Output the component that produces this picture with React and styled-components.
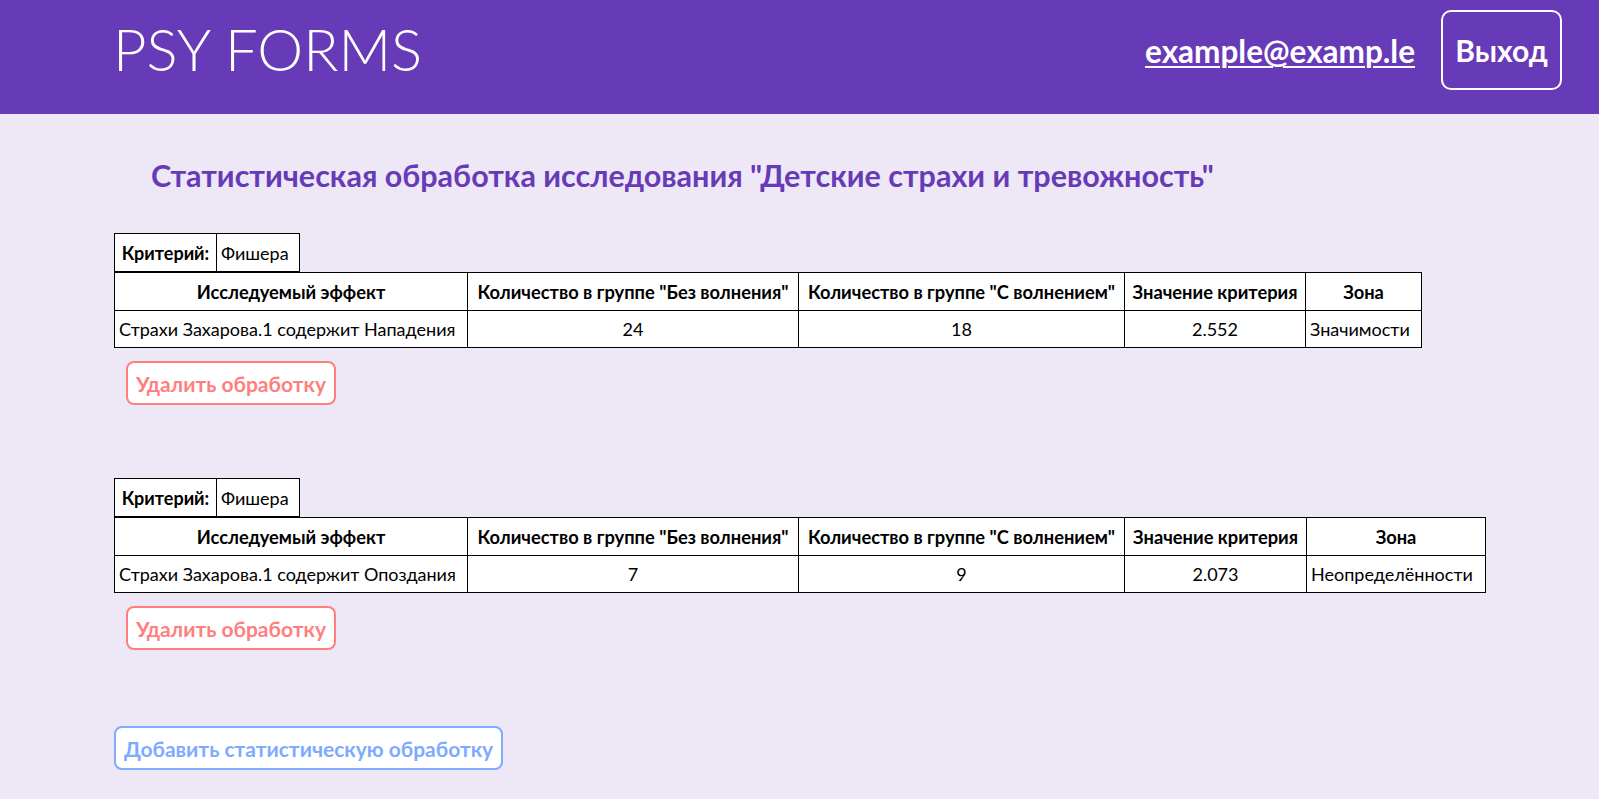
import React from "react";
import styled, { createGlobalStyle } from "styled-components";

const GlobalStyle = createGlobalStyle`
  html, body { margin: 0; padding: 0; }
  body {
    background: #ede7f6;
    font-family: Lato, "Open Sans", "Noto Sans", sans-serif;
    color: #000;
    min-height: 100vh;
  }
`;

const Page = styled.div`
  min-height: 100vh;
  background: #ede7f6;
`;

const Header = styled.header`
  height: 114px;
  background: #673ab7;
  display: flex;
  align-items: flex-start;
  justify-content: space-between;
  padding: 10px 37px 0 113px;
  box-sizing: border-box;
`;

const Logo = styled.div`
  color: #fff;
  font-size: 58px;
  font-weight: 300;
  line-height: 80px;
  margin-top: -1px;
`;

const UserBox = styled.div`
  display: flex;
  align-items: center;
  gap: 26px;
`;

const Email = styled.a`
  color: #fff;
  font-weight: 700;
  font-size: 31.5px;
  text-decoration: underline;
  text-decoration-thickness: 2px;
  text-underline-offset: 3px;
  margin-top: 2px;
`;

const LogoutButton = styled.button`
  height: 80px;
  width: 121px;
  box-sizing: border-box;
  background: transparent;
  border: 2px solid #fff;
  border-radius: 10px;
  color: #fff;
  font-family: inherit;
  font-weight: 700;
  font-size: 30px;
  padding: 0;
  cursor: pointer;
`;

const Main = styled.main`
  padding: 0 0 40px 114px;
  display: flex;
  flex-direction: column;
  align-items: flex-start;
`;

const Title = styled.h2`
  margin: 41px 0 0 37px;
  color: #673ab7;
  font-size: 30.5px;
  font-weight: 700;
  line-height: 40px;
`;

const Section = styled.section`
  display: flex;
  flex-direction: column;
  align-items: flex-start;
  margin-top: ${(p) => p.$top}px;
`;

const Table = styled.table`
  border-collapse: collapse;
  background: #fff;
  font-size: 18px;
`;

const Cell = styled.td`
  border: 1px solid #000;
  height: ${(p) => p.$h || 37}px;
  padding: 0 4px;
  white-space: nowrap;
  text-align: ${(p) => (p.$left ? "left" : "center")};
  font-weight: ${(p) => (p.$bold ? 700 : 400)};
  box-sizing: border-box;
`;

const HeadCell = styled.th`
  border: 1px solid #000;
  height: 38px;
  padding: 0 4px;
  font-size: 18.3px;
  white-space: nowrap;
  font-weight: 700;
  text-align: center;
  box-sizing: border-box;
`;

const Col = styled.col`
  width: ${(p) => p.$w}px;
`;

const OutlineButton = styled.button`
  box-sizing: border-box;
  height: ${(p) => p.$h}px;
  padding: 0 8px;
  background: #fff;
  border: 2px solid ${(p) => p.$color};
  border-radius: 8px;
  color: ${(p) => p.$color};
  font-family: inherit;
  font-weight: 700;
  font-size: 21px;
  cursor: pointer;
  margin-top: ${(p) => p.$top}px;
  margin-left: ${(p) => p.$left}px;
`;

const columns = [
  "Исследуемый эффект",
  'Количество в группе "Без волнения"',
  'Количество в группе "С волнением"',
  "Значение критерия",
  "Зона",
];

const analyses = [
  {
    criterion: "Фишера",
    effect: "Страхи Захарова.1 содержит Нападения",
    a: "24",
    b: "18",
    value: "2.552",
    zone: "Значимости",
    widths: [353, 331, 326, 181, 116],
    top: 38,
  },
  {
    criterion: "Фишера",
    effect: "Страхи Захарова.1 содержит Опоздания",
    a: "7",
    b: "9",
    value: "2.073",
    zone: "Неопределённости",
    widths: [353, 331, 326, 182, 179],
    top: 73,
  },
];

function Analysis({ item }) {
  return (
    <Section $top={item.top}>
      <Table>
        <colgroup>
          <Col $w={102} />
          <Col $w={83} />
        </colgroup>
        <tbody>
          <tr>
            <Cell $bold $h={38}>Критерий:</Cell>
            <Cell $left $h={38}>{item.criterion}</Cell>
          </tr>
        </tbody>
      </Table>
      <Table>
        <colgroup>
          {item.widths.map((w, i) => (
            <Col key={i} $w={w} />
          ))}
        </colgroup>
        <thead>
          <tr>
            {columns.map((c) => (
              <HeadCell key={c}>{c}</HeadCell>
            ))}
          </tr>
        </thead>
        <tbody>
          <tr>
            <Cell $left>{item.effect}</Cell>
            <Cell>{item.a}</Cell>
            <Cell>{item.b}</Cell>
            <Cell>{item.value}</Cell>
            <Cell $left>{item.zone}</Cell>
          </tr>
        </tbody>
      </Table>
      <OutlineButton $color="#ff7f7f" $h={44} $top={13} $left={12}>
        Удалить обработку
      </OutlineButton>
    </Section>
  );
}

export default function App() {
  return (
    <Page>
      <GlobalStyle />
      <Header>
        <Logo>PSY FORMS</Logo>
        <UserBox>
          <Email href="#">example@examp.le</Email>
          <LogoutButton>Выход</LogoutButton>
        </UserBox>
      </Header>
      <Main>
        <Title>Статистическая обработка исследования "Детские страхи и тревожность"</Title>
        {analyses.map((a, i) => (
          <Analysis key={i} item={a} />
        ))}
        <OutlineButton $color="#7eaaff" $h={44} $top={76} $left={0}>
          Добавить статистическую обработку
        </OutlineButton>
      </Main>
    </Page>
  );
}
